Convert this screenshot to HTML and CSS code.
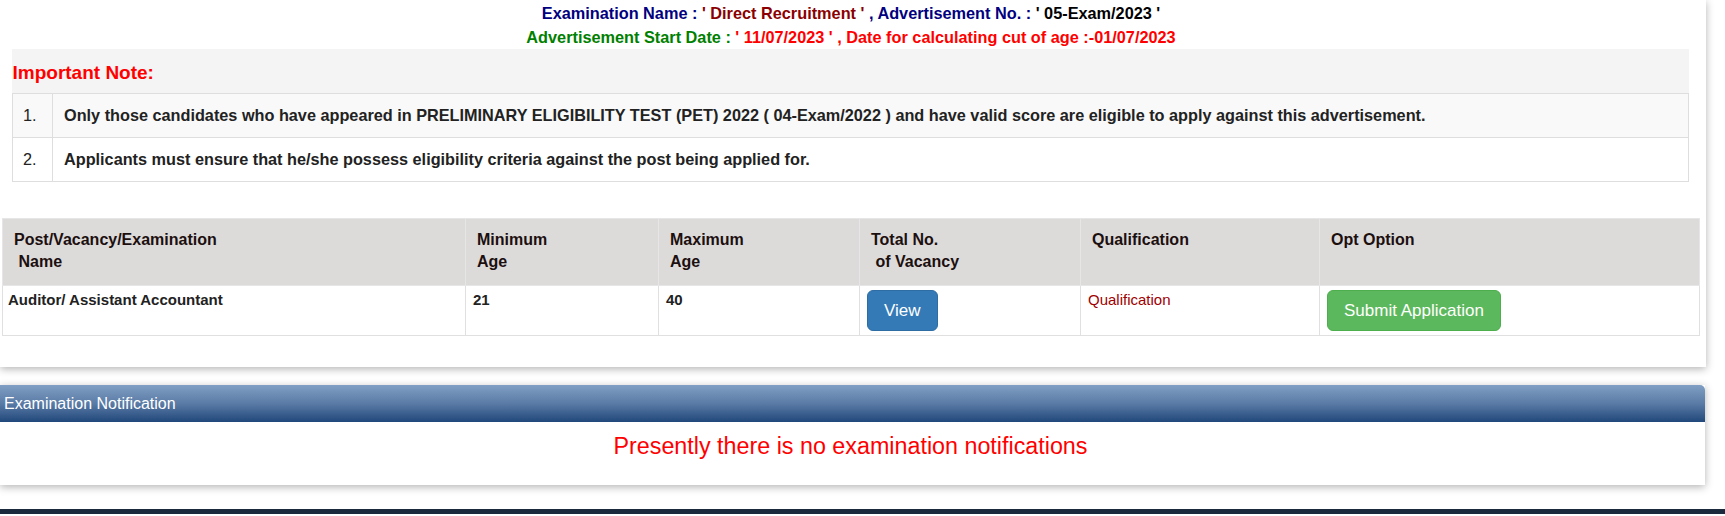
FILE: index.html
```html
<!DOCTYPE html>
<html lang="en">
<head>
  <meta charset="UTF-8" />
  <meta name="viewport" content="width=device-width, initial-scale=1.0" />
  <title>Examination</title>
  <link rel="stylesheet" href="styles.css">
</head>

<body>
  <div class="exam-panel">
    <div class="exam-info">
      <div>
        <span class="c-navy">Examination Name : </span><span class="c-maroon">' Direct Recruitment '</span>
        <span class="c-navy">, Advertisement No. : </span><span class="c-black">' 05-Exam/2023 '</span>
      </div>
      <div>
        <span class="c-green">Advertisement Start Date : </span><span class="c-red">' 11/07/2023 ' , Date for calculating cut of age :-01/07/2023</span>
      </div>
    </div>

    <table class="note-table">
      <tr>
        <th colspan="2" class="note-title">Important Note:</th>
      </tr>
      <tr class="odd">
        <td class="note-num">1.</td>
        <td class="note-text">Only those candidates who have appeared in PRELIMINARY ELIGIBILITY TEST (PET) 2022 ( 04-Exam/2022 ) and have valid score are eligible to apply against this advertisement.</td>
      </tr>
      <tr>
        <td class="note-num">2.</td>
        <td class="note-text">Applicants must ensure that he/she possess eligibility criteria against the post being applied for.</td>
      </tr>
    </table>

    <table class="post-table">
      <colgroup>
        <col style="width: 463px">
        <col style="width: 193px">
        <col style="width: 201px">
        <col style="width: 221px">
        <col style="width: 239px">
        <col>
      </colgroup>
      <thead>
        <tr>
          <th>Post/Vacancy/Examination<br>&nbsp;Name</th>
          <th>Minimum<br>Age</th>
          <th>Maximum<br>Age</th>
          <th>Total No.<br>&nbsp;of Vacancy</th>
          <th>Qualification</th>
          <th>Opt Option</th>
        </tr>
      </thead>
      <tbody>
        <tr>
          <td class="post-name">Auditor/ Assistant Accountant</td>
          <td class="bold">21</td>
          <td class="bold">40</td>
          <td><button class="btn btn-primary">View</button></td>
          <td><a href="#" class="qual-link">Qualification</a></td>
          <td><button class="btn btn-success">Submit Application</button></td>
        </tr>
      </tbody>
    </table>
  </div>

  <div class="notify-panel">
    <div class="notify-heading">Examination Notification</div>
    <div class="notify-body">Presently there is no examination notifications</div>
  </div>

  <footer class="page-footer"></footer>
</body>
</html>
```

FILE: styles.css
```css
* {
  box-sizing: border-box;
}

body {
  margin: 0;
  background-color: #fff;
  color: #222;
  font-family: 'Liberation Sans', Arial, sans-serif;
  font-size: 14px;
}

.exam-panel {
  width: 1706px;
  background: #fff;
  padding: 0 0 31px;
  box-shadow: 0 2px 8px rgba(0, 0, 0, 0.3);
}

.exam-info {
  text-align: center;
  font-weight: bold;
  font-size: 16.3px;
  line-height: 24px;
  padding: 1px 4px 0 0;
}

.c-navy { color: #000080; }
.c-maroon { color: #8b0000; }
.c-black { color: #000; }
.c-green { color: #008000; }
.c-red { color: #ff0000; }

.note-table {
  width: 1677px;
  margin: 0 0 0 12px;
  border-collapse: collapse;
  background: #f4f4f4;
}

.note-table th,
.note-table td {
  border: 1px solid #dedede;
  height: 44px;
  font-size: 16.25px;
  color: #222;
}

.note-title {
  text-align: left;
  color: #ff0000 !important;
  font-size: 19px !important;
  padding: 4px 0 0 0;
  border-left: none !important;
  border-right: none !important;
  border-top: none !important;
}

.note-table tr.odd td {
  background: #f9f9f9;
}

.note-table tr td {
  background: #fff;
}

.note-num {
  width: 40px;
  padding-left: 10px;
}

.note-text {
  font-weight: bold;
  padding-left: 11px;
}

.post-table {
  width: 1698px;
  margin: 36px 0 0 2px;
  border-collapse: collapse;
  table-layout: fixed;
}

.post-table th,
.post-table td {
  border: 1px solid #e0e0e0;
  vertical-align: top;
  text-align: left;
}

.post-table th {
  background-color: #dcdbda;
  color: #1c0f0f;
  font-size: 16px;
  line-height: 22px;
  padding: 10px 11px 12px;
  border-color: #e6e6e6;
}

.post-table td {
  padding: 4px 7px;
  line-height: 20px;
  font-size: 15px;
}

.post-name {
  font-weight: bold;
  padding-left: 5px !important;
}

.bold {
  font-weight: bold;
}

.qual-link {
  color: #a00000;
  text-decoration: none;
}

.btn {
  font-family: 'Liberation Sans', Arial, sans-serif;
  font-size: 17px;
  line-height: 23px;
  padding: 8px 16px;
  border: 1px solid transparent;
  border-radius: 6px;
  color: #fff;
  cursor: pointer;
}

.btn-primary {
  background-color: #337ab7;
  border-color: #2e6da4;
}

.btn-success {
  background-color: #5cb85c;
  border-color: #4cae4c;
}

.notify-panel {
  width: 1705px;
  margin-top: 18px;
  box-shadow: 0 2px 8px rgba(0, 0, 0, 0.3);
}

.notify-heading {
  height: 37px;
  line-height: 37px;
  padding-left: 4px;
  color: #fff;
  font-size: 16px;
  background: linear-gradient(to bottom, #819fc4, #5a7ba6 50%, #21487b);
  border-top-right-radius: 5px;
}

.notify-body {
  background: #fff;
  height: 63px;
  padding: 10px 4px 0 0;
  text-align: center;
  color: #ff0000;
  font-size: 23.3px;
  line-height: 28px;
}

.page-footer {
  margin-top: 24px;
  height: 5px;
  background-color: #1b2a3c;
}
```
